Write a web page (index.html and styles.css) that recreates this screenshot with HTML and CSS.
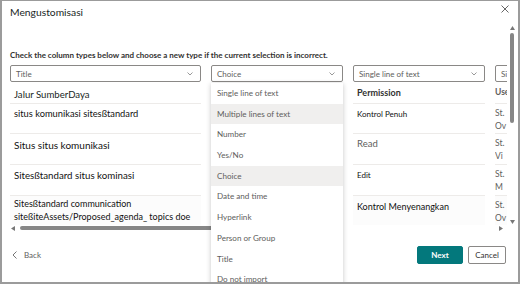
FILE: index.html
```html
<!DOCTYPE html>
<html>
<head>
<meta charset="utf-8">
<link rel="stylesheet" href="styles.css">
</head>
<body>
<div class="dialog">
  <div class="head">
    <span class="title">Mengustomisasi</span>
    <svg class="close" width="8" height="8" viewBox="0 0 8 8"><path d="M0.5 0.5L7.5 7.5M7.5 0.5L0.5 7.5" stroke="#666" stroke-width="1"/></svg>
  </div>
  <p class="intro">Check the column types below and choose a new type if the current selection is incorrect.</p>
  <div class="table">
    <div class="grid">
      <div class="cell sel"><div class="box"><span>Title</span><svg class="chev" width="6" height="4" viewBox="0 0 6 4"><path d="M0.5 0.5L3 3L5.5 0.5" fill="none" stroke="#999"/></svg></div></div>
      <div class="cell sel anchor"><div class="box"><span>Choice</span><svg class="chev" width="6" height="4" viewBox="0 0 6 4"><path d="M0.5 0.5L3 3L5.5 0.5" fill="none" stroke="#999"/></svg></div>
        <ul class="menu">
          <li>Single line of text</li>
          <li class="hl">Multiple lines of text</li>
          <li>Number</li>
          <li>Yes/No</li>
          <li class="hl">Choice</li>
          <li>Date and time</li>
          <li>Hyperlink</li>
          <li>Person or Group</li>
          <li>Title</li>
          <li>Do not import</li>
        </ul>
      </div>
      <div class="cell sel"><div class="box"><span>Single line of text</span><svg class="chev" width="6" height="4" viewBox="0 0 6 4"><path d="M0.5 0.5L3 3L5.5 0.5" fill="none" stroke="#999"/></svg></div></div>
      <div class="cell sel clip"><div class="box wide"><span>Single line of text</span></div></div>

      <div class="cell hd c1 lead">Jalur SumberDaya</div>
      <div class="cell hd"></div>
      <div class="cell hd c3 strong">Permission</div>
      <div class="cell hd c4 clip strong">User</div>

      <div class="cell row c1 r1">situs komunikasi sitesßtandard</div>
      <div class="cell row"></div>
      <div class="cell row c3 small">Kontrol Penuh</div>
      <div class="cell row c4 clip">St.<br>Ov</div>

      <div class="cell row c1 big">Situs situs komunikasi</div>
      <div class="cell row"></div>
      <div class="cell row c3 gray">Read</div>
      <div class="cell row c4 clip">St.<br>Vi</div>

      <div class="cell row c1 r3">Sitesßtandard situs kominasi</div>
      <div class="cell row"></div>
      <div class="cell row c3 small">Edit</div>
      <div class="cell row c4 clip">St.<br>M</div>

      <div class="cell row last c1 tight">Sitesßtandard communication<br>siteßiteAssets/Proposed_agenda_ topics doe</div>
      <div class="cell row last"></div>
      <div class="cell row last c3 mid">Kontrol Menyenangkan</div>
      <div class="cell row last c4 clip">St.<br>Ov</div>
    </div>
    <div class="hscroll">
      <svg class="arr" width="4" height="5" viewBox="0 0 4 5"><path d="M4 0L0 2.5L4 5Z" fill="#777"/></svg>
      <div class="hthumb"></div>
      <div class="htrack"></div>
      <svg class="arr" width="4" height="5" viewBox="0 0 4 5"><path d="M0 0L4 2.5L0 5Z" fill="#777"/></svg>
    </div>
  </div>
  <div class="foot">
    <div class="back">
      <svg width="5" height="8" viewBox="0 0 5 8"><path d="M4.5 0.5L1 4L4.5 7.5" fill="none" stroke="#777"/></svg>
      <span>Back</span>
    </div>
    <div class="btns">
      <button class="btn primary">Next</button>
      <button class="btn">Cancel</button>
    </div>
  </div>
  <div class="vscroll">
    <svg width="5" height="4" viewBox="0 0 5 4"><path d="M0 4L2.5 0L5 4Z" fill="#777"/></svg>
    <div class="vthumb"></div>
    <div class="vgap"></div>
    <svg width="5" height="4" viewBox="0 0 5 4"><path d="M0 0L2.5 4L5 0Z" fill="#777"/></svg>
  </div>
</div>
</body>
</html>
```

FILE: styles.css
```css
* { box-sizing: border-box; }
html, body { margin: 0; padding: 0; background: #fff; }
body { font-family: Lato, "Noto Sans", sans-serif; color: #323130; }

.dialog {
  position: relative;
  width: 520px;
  height: 284px;
  border: 2px solid #9b9b9b;
  border-top-width: 1px;
  overflow: hidden;
  padding: 0 11px 0 8px;
  background: #fff;
}

.head {
  height: 22px;
  padding-top: 4px;
  display: flex;
  justify-content: space-between;
  align-items: flex-start;
}
.title { font-size: 10.3px; line-height: 14px; color: #201f1e; }
.close { margin-top: 0; margin-right: -2px; }

.intro {
  margin: 27px 0 5px;
  font-size: 8px;
  line-height: 10px;
  font-weight: 700;
  color: #323130;
  white-space: nowrap;
}

.table { position: relative; }
.grid {
  display: grid;
  grid-template-columns: 191px 132px 132px 12px;
  grid-template-rows: 18px 20px 30px 31px 31px 30px;
  column-gap: 10px;
}
.cell { min-width: 0; }
.clip { overflow: hidden; white-space: nowrap; }

.box {
  height: 17px;
  border: 1px solid #8a8886;
  border-radius: 2px;
  display: flex;
  align-items: center;
  justify-content: space-between;
  padding: 0 7px 0 5px;
  font-size: 8px;
  color: #605e5c;
}
.box.wide { width: 60px; }
.chev { flex: none; }

.anchor { position: relative; z-index: 5; }
.menu {
  position: absolute;
  top: 18px;
  left: 0;
  width: 100%;
  margin: 0;
  padding: 0;
  list-style: none;
  background: #fff;
  box-shadow: 0 1px 5px rgba(0,0,0,0.22);
}
.menu li {
  height: 20.7px;
  line-height: 20.7px;
  padding-left: 6px;
  font-size: 8.1px;
  color: #605e5c;
}
.menu li.hl { background: #f0efee; }

.hd { font-size: 9px; line-height: 12px; padding-top: 7px; color: #201f1e; }
.hd.c1 { padding-left: 4px; }
.hd.lead { font-size: 9.6px; padding-top: 6px; }
.hd.c3 { padding-left: 4px; }
.strong { font-weight: 700; color: #323130; }

.row { border-top: 1px solid #edebe9; font-size: 9px; line-height: 12.5px; color: #111; }
.row.last { background: #fcfcfc; }
.c1 { padding-left: 4px; padding-top: 4px; }
.c1.r1 { font-size: 9.3px; }
.c1.big { font-size: 10px; padding-top: 5px; }
.c1.r3 { font-size: 9.7px; }
.c1.tight { padding-top: 1px; line-height: 13px; }
.c3 { padding-left: 4px; padding-top: 4px; }
.c3.small { font-size: 8px; }
.c3.gray { color: #605e5c; font-size: 9.5px; }
.c3.mid { font-size: 9px; padding-top: 5px; }
.c4 { padding-top: 3px; color: #605e5c; font-size: 8.5px; }

.hscroll {
  height: 6px;
  display: flex;
  align-items: center;
  gap: 3px;
  padding: 0 4px 0 1px;
}
.arr { flex: none; }
.hthumb { width: 300px; height: 4px; border-radius: 2px; background: #868686; margin-left: 2px; }
.htrack { flex: 1; height: 4px; }

.foot {
  margin-top: 15px;
  height: 18px;
  display: flex;
  justify-content: space-between;
  align-items: center;
  padding-right: 1px;
}
.back { display: flex; align-items: center; gap: 7px; padding-left: 2px; font-size: 8px; color: #605e5c; }
.btns { display: flex; gap: 5px; }
.btn {
  height: 18px;
  font-family: Lato, "Noto Sans", sans-serif;
  font-size: 8px;
  border-radius: 2px;
  border: 1px solid #8a8886;
  background: #fff;
  color: #323130;
  width: 38px;
  padding: 0;
}
.btn.primary {
  width: 46px;
  background: #03787c;
  border-color: #03787c;
  color: #fff;
  font-weight: 700;
}

.vscroll {
  position: absolute;
  top: 25px;
  right: 3px;
  width: 6px;
  height: 198px;
  display: flex;
  flex-direction: column;
  align-items: center;
  gap: 3px;
}
.vthumb { width: 4px; height: 90px; border-radius: 2px; background: #868686; }
.vgap { flex: 1; }
```
